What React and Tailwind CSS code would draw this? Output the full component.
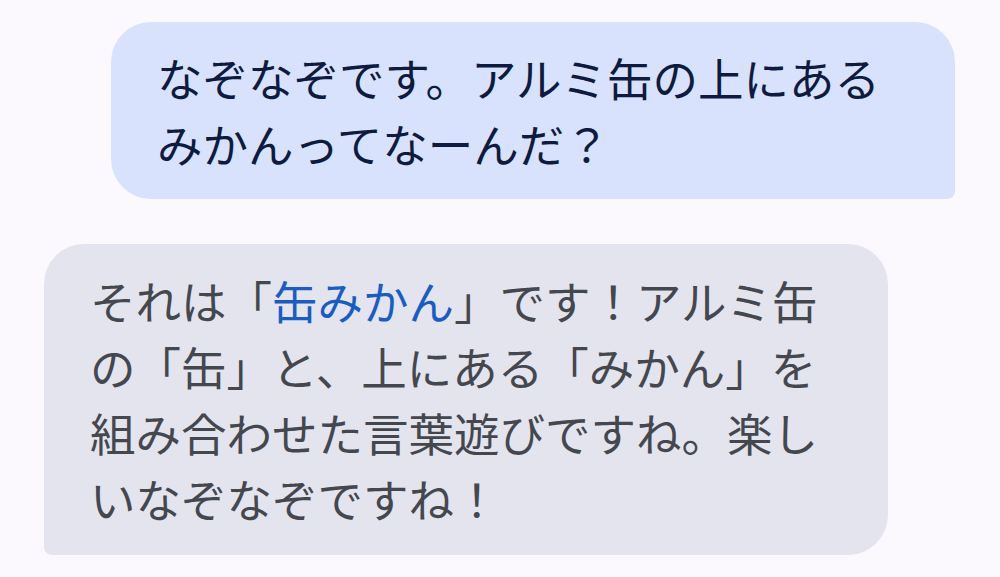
export default function App() {
  return (
    <div
      className="w-[1000px] h-[577px] bg-[#fbf9fe] overflow-hidden"
      style={{ fontFamily: '"Noto Sans CJK JP", "Noto Sans", sans-serif' }}
    >
      <div className="flex flex-col pt-[22px]">
        <div className="flex justify-end pr-[45px]">
          <div className="w-[844px] bg-[#d8e2fc] rounded-[40px] rounded-br-[8px] pl-[46px] pt-[22px] pb-[23px] text-[45.5px] leading-[66px] text-[#0e1b3f]">
            なぞなぞです。アルミ缶の上にある
            <br />
            みかんってなーんだ？
          </div>
        </div>
        <div className="flex justify-start pl-[44px] mt-[45px]">
          <div className="w-[844px] bg-[#e3e4ee] rounded-[40px] rounded-bl-[8px] pl-[46px] pt-[23px] pb-[24px] text-[45.5px] leading-[66px] text-[#45474f]">
            それは「<span className="text-[#1a5cc0]">缶みかん</span>」です！アルミ缶
            <br />
            の「缶」と、上にある「みかん」を
            <br />
            組み合わせた言葉遊びですね。楽し
            <br />
            いなぞなぞですね！
          </div>
        </div>
      </div>
    </div>
  );
}
